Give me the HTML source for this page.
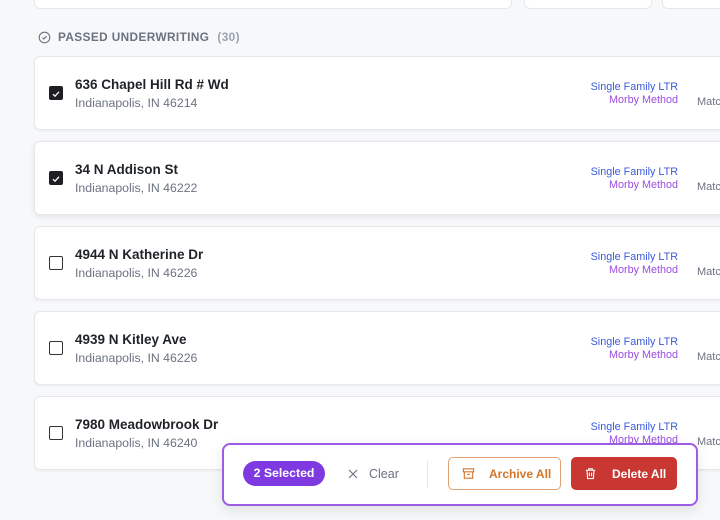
<!DOCTYPE html>
<html><head><style>
body{margin:0;width:720px;height:520px;background:#f7f8fa;font-family:"Liberation Sans",sans-serif;position:relative;overflow:hidden}
.top{position:absolute;top:-10px;height:17px;background:#fff;border:1px solid #e5e7eb;border-radius:6px}
.hdr{position:absolute;left:38px;top:30px;font-size:11.8px;font-weight:bold;color:#6b7280;letter-spacing:.4px;display:flex;align-items:center}
.card{position:absolute;left:34px;width:700px;height:72px;background:#fff;border:1px solid #e5e7eb;border-radius:6px;box-shadow:0 1px 2px rgba(0,0,0,.05)}
.cb{position:absolute;left:14px;top:29px;width:12px;height:12px;border:1.5px solid #333;border-radius:2px;background:#fff}
.cb.on{background:#1f1f23;border-color:#1f1f23}
.t{position:absolute;left:40px;top:20px;font-size:13.5px;font-weight:bold;color:#1f2328}
.s{position:absolute;left:40px;top:39px;font-size:12.3px;color:#6b7280}
.r1{position:absolute;right:57px;top:24px;font-size:10.8px;color:#3b5bdb;text-align:right}
.r2{position:absolute;right:57px;top:37px;font-size:10.8px;color:#9b4de0;text-align:right}
.m{position:absolute;left:662px;top:39px;font-size:11px;color:#6b7280}
.bar{position:absolute;left:222px;top:443px;width:472px;height:59px;background:#fff;border:2px solid #9d5ce6;border-radius:8px;box-shadow:0 4px 12px rgba(0,0,0,.1)}
</style></head><body>
<div class="top" style="left:34px;width:476px"></div>
<div class="top" style="left:524px;width:126px"></div>
<div class="top" style="left:662px;width:80px"></div>
<div class="hdr"><svg width="13" height="13" viewBox="0 0 14 14" style="margin-right:7px"><circle cx="7" cy="7" r="5.7" fill="none" stroke="#6b7280" stroke-width="1.2"/><path d="M4.8 7.2l1.5 1.4 3-3" fill="none" stroke="#6b7280" stroke-width="1.2"/></svg>PASSED UNDERWRITING<span style="margin-left:8px;color:#9ca3af">(30)</span></div>

<div class="card" style="top:56px"><div class="cb on"><svg width="12" height="12" viewBox="0 0 12 12"><path d="M3 6.2l2 2 4-4.4" fill="none" stroke="#fff" stroke-width="1.3"/></svg></div><div class="t">636 Chapel Hill Rd # Wd</div><div class="s">Indianapolis, IN 46214</div><div class="r1">Single Family LTR</div><div class="r2">Morby Method</div><div class="m">Match</div></div>
<div class="card" style="top:141px;box-shadow:0 2px 6px rgba(0,0,0,.08)"><div class="cb on"><svg width="12" height="12" viewBox="0 0 12 12"><path d="M3 6.2l2 2 4-4.4" fill="none" stroke="#fff" stroke-width="1.3"/></svg></div><div class="t">34 N Addison St</div><div class="s">Indianapolis, IN 46222</div><div class="r1">Single Family LTR</div><div class="r2">Morby Method</div><div class="m">Match</div></div>
<div class="card" style="top:226px"><div class="cb"></div><div class="t">4944 N Katherine Dr</div><div class="s">Indianapolis, IN 46226</div><div class="r1">Single Family LTR</div><div class="r2">Morby Method</div><div class="m">Match</div></div>
<div class="card" style="top:311px"><div class="cb"></div><div class="t">4939 N Kitley Ave</div><div class="s">Indianapolis, IN 46226</div><div class="r1">Single Family LTR</div><div class="r2">Morby Method</div><div class="m">Match</div></div>
<div class="card" style="top:396px"><div class="cb"></div><div class="t">7980 Meadowbrook Dr</div><div class="s">Indianapolis, IN 46240</div><div class="r1">Single Family LTR</div><div class="r2">Morby Method</div><div class="m">Match</div></div>

<div class="bar">
<div style="position:absolute;left:19px;top:16px;width:82px;height:25px;border-radius:13px;background:#7e3ae0;color:#fff;font-size:12.3px;font-weight:bold;text-align:center;line-height:25px">2 Selected</div>
<svg style="position:absolute;left:124px;top:24px" width="10" height="10" viewBox="0 0 10 10"><path d="M1 1l8 8M9 1l-8 8" stroke="#6b7280" stroke-width="1.2"/></svg>
<div style="position:absolute;left:145px;top:22px;font-size:12.5px;color:#6b7280">Clear</div>
<div style="position:absolute;left:203px;top:16px;width:1px;height:27px;background:#e5e7eb"></div>
<div style="position:absolute;left:224px;top:12px;width:111px;height:31px;border:1px solid #e0a070;border-radius:5px;color:#d2762a;font-size:12px;font-weight:bold">
<svg style="position:absolute;left:13px;top:9px" width="13" height="13" viewBox="0 0 14 14"><rect x="1.5" y="2" width="11" height="3.2" fill="none" stroke="#d2762a" stroke-width="1.2"/><path d="M2.5 5.2v6.8h9V5.2M5.5 8h3" fill="none" stroke="#d2762a" stroke-width="1.2"/></svg>
<span style="position:absolute;left:40px;top:9px">Archive All</span></div>
<div style="position:absolute;left:347px;top:12px;width:106px;height:33px;background:#c83731;border-radius:5px;color:#fff;font-size:12px;font-weight:bold">
<svg style="position:absolute;left:13px;top:10px" width="13" height="13" viewBox="0 0 14 14"><path d="M2 3.5h10M5 3.5V2h4v1.5M3.2 3.5l.7 9h6.2l.7-9M5.8 6v4M8.2 6v4" fill="none" stroke="#fff" stroke-width="1.2"/></svg>
<span style="position:absolute;left:41px;top:10px">Delete All</span></div>
</div>
</body></html>
